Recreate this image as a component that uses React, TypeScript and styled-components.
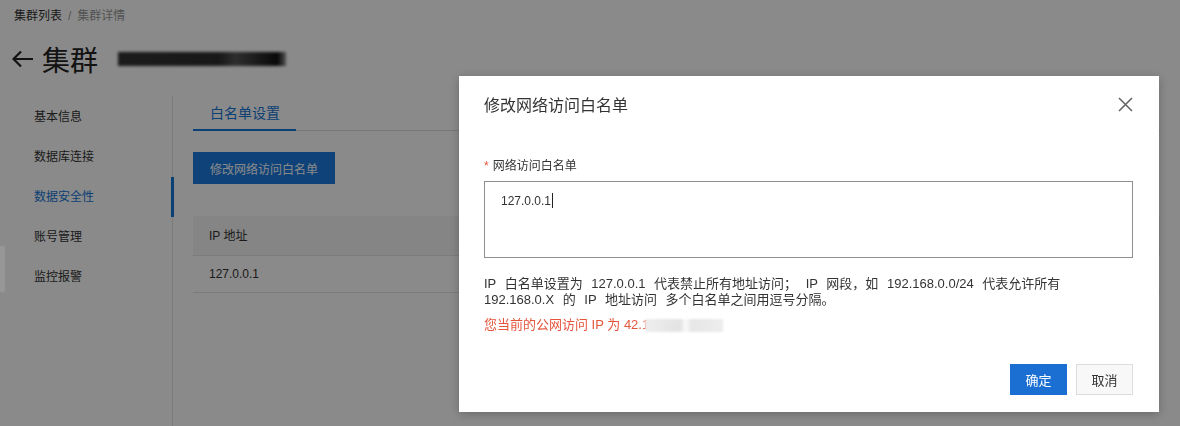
import React from 'react'
import styled, {createGlobalStyle} from 'styled-components'

const GlobalStyle = createGlobalStyle`
  html, body {
    margin: 0;
    padding: 0;
    background: #fff;
    font-family: "Liberation Sans", "Noto Sans CJK SC", sans-serif;
    color: #333;
  }
  * {
    box-sizing: border-box;
  }
`

const Page = styled.div`
  height: 426px;
  overflow: hidden;
`

const Breadcrumb = styled.div`
  display: flex;
  align-items: center;
  gap: 6px;
  padding: 8px 0 0 14px;
  font-size: 12px;
  line-height: 16px;
  color: #333;

  span.sep, span.current {
    color: #999;
  }
`

const TitleRow = styled.div`
  display: flex;
  align-items: center;
  height: 44px;
  margin-top: 13px;
  padding-left: 12px;
  font-size: 28px;
  color: #222;

  h1 {
    margin: 0 0 0 8px;
    font-size: 28px;
    font-weight: 400;
  }
`

const BlurredName = styled.div`
  width: 168px;
  height: 14px;
  margin-left: 20px;
  background: linear-gradient(90deg, #333 0%, #2e2e2e 60%, #555 70%, #111 95%, #999 100%);
  filter: blur(1.5px);
`

const Body = styled.div`
  display: flex;
  margin-top: 15px;
`

const Nav = styled.ul`
  list-style: none;
  margin: 0;
  padding: 1px 0 0;
  width: 173px;
  height: 340px;
  border-right: 1px solid #e2e2e2;
`

const NavItem = styled.li<{ $active?: boolean }>`
  position: relative;
  height: 40px;
  line-height: 40px;
  padding-left: 34px;
  font-size: 12px;
  color: ${({$active}) => $active ? '#1476d6' : '#333'};

  &::after {
    content: "";
    display: ${({$active}) => $active ? 'block' : 'none'};
    position: absolute;
    right: -2px;
    top: 0;
    width: 3px;
    height: 40px;
    background: #1476d6;
  }
`

const Content = styled.div`
  flex: 1;
  padding: 0 20px;
`

const Tabs = styled.div`
  display: flex;
  border-bottom: 1px solid #ddd;
  height: 35px;
`

const Tab = styled.div`
  padding: 0 16px 0 17px;
  font-size: 14px;
  line-height: 34px;
  color: #1476d6;
  border-bottom: 2px solid #1476d6;
  margin-bottom: -1px;
`

const PrimaryButton = styled.button`
  height: 32px;
  padding: 0 17px;
  border: none;
  background: #1a7ae0;
  color: #fff;
  font-family: inherit;
  font-size: 12px;
  cursor: pointer;
`

const TopButton = styled(PrimaryButton)`
  margin-top: 21px;
`

const Table = styled.div`
  margin-top: 32px;
  font-size: 12px;
`

const TableRow = styled.div<{ $head?: boolean }>`
  height: ${({$head}) => $head ? '40px' : '37px'};
  line-height: ${({$head}) => $head ? '40px' : '36px'};
  padding-left: 16px;
  background: ${({$head}) => $head ? '#f6f6f6' : '#fff'};
  border-bottom: 1px solid #e6e6e6;
  color: #333;
`

const SideHandle = styled.div`
  position: fixed;
  left: -2px;
  top: 245px;
  width: 8px;
  height: 48px;
  border-radius: 3px;
  background: #979797;
  border: 1px solid #8b8b8b;
  z-index: 20;
`

const Overlay = styled.div`
  position: fixed;
  inset: 0;
  background: rgba(0, 0, 0, 0.46);
  z-index: 10;
`

const Dialog = styled.div`
  position: fixed;
  left: 459px;
  top: 76px;
  width: 700px;
  height: 336px;
  background: #fff;
  box-shadow: 0 2px 10px rgba(0, 0, 0, 0.25);
  z-index: 30;
  display: flex;
  flex-direction: column;
  padding: 0 26px 0 25px;
`

const DialogHeader = styled.div`
  display: flex;
  align-items: center;
  justify-content: space-between;
  height: 56px;

  h2 {
    margin: 0;
    font-size: 16px;
    font-weight: 400;
    color: #333;
  }
`

const CloseButton = styled.button`
  display: grid;
  place-items: center;
  width: 20px;
  height: 20px;
  padding: 0;
  margin-right: -2px;
  border: none;
  background: none;
  cursor: pointer;
`

const FieldLabel = styled.label`
  display: block;
  margin-top: 26px;
  font-size: 12px;
  line-height: 16px;
  color: #333;

  span {
    color: #e8553a;
    margin-right: 4px;
  }
`

const TextArea = styled.div`
  margin-top: 7px;
  height: 77px;
  border: 1px solid #8f8f8f;
  padding: 11px 16px;
  font-size: 12px;
  line-height: 16px;
  color: #333;
`

const Caret = styled.span`
  display: inline-block;
  width: 1px;
  height: 15px;
  margin-left: 1px;
  vertical-align: -3px;
  background: #222;
`

const HelpText = styled.p`
  margin: 18px 0 0;
  font-size: 13px;
  line-height: 16px;
  word-spacing: 5px;
  color: #333;
`

const WarnText = styled.p`
  display: flex;
  align-items: center;
  margin: 9px 0 0;
  font-size: 13px;
  line-height: 16px;
  color: #e4553c;
`

const BlurIp = styled.span`
  display: inline-block;
  width: 78px;
  height: 13px;
  margin-left: -4px;
  background: linear-gradient(90deg, #eee 0%, #e3e3e3 45%, #fafafa 52%, #e6e6e6 60%, #ededed 100%);
  filter: blur(1px);
`

const Footer = styled.div`
  display: flex;
  justify-content: flex-end;
  gap: 9px;
  margin-top: auto;
  padding-bottom: 17px;
`

const OkButton = styled(PrimaryButton)`
  width: 57px;
  height: 31px;
  padding: 0;
  font-size: 13px;
  background: #1b6fd3;
`

const CancelButton = styled.button`
  width: 57px;
  height: 31px;
  border: 1px solid #ddd;
  background: #f8f8f8;
  color: #333;
  font-family: inherit;
  font-size: 13px;
  cursor: pointer;
`

const App = () => {
  const navItems = ['基本信息', '数据库连接', '数据安全性', '账号管理', '监控报警']

  return (
    <Page>
      <GlobalStyle/>
      <Breadcrumb>
        <span>集群列表</span>
        <span className="sep">/</span>
        <span className="current">集群详情</span>
      </Breadcrumb>
      <TitleRow>
        <svg width="22" height="18" viewBox="0 0 22 18">
          <path d="M21 9H2M9 1.5L1.5 9L9 16.5" fill="none" stroke="#222" strokeWidth="2.2"/>
        </svg>
        <h1>集群</h1>
        <BlurredName/>
      </TitleRow>
      <Body>
        <Nav>
          {navItems.map((item, i) => (
            <NavItem key={item} $active={i === 2}>{item}</NavItem>
          ))}
        </Nav>
        <Content>
          <Tabs>
            <Tab>白名单设置</Tab>
          </Tabs>
          <TopButton>修改网络访问白名单</TopButton>
          <Table>
            <TableRow $head>IP 地址</TableRow>
            <TableRow>127.0.0.1</TableRow>
          </Table>
        </Content>
      </Body>

      <Overlay/>
      <SideHandle/>

      <Dialog>
        <DialogHeader>
          <h2>修改网络访问白名单</h2>
          <CloseButton aria-label="close">
            <svg width="15" height="15" viewBox="0 0 15 15">
              <path d="M1 1L14 14M14 1L1 14" stroke="#666" strokeWidth="1.6" fill="none"/>
            </svg>
          </CloseButton>
        </DialogHeader>
        <FieldLabel><span>*</span>网络访问白名单</FieldLabel>
        <TextArea>127.0.0.1<Caret/></TextArea>
        <HelpText>
          IP 白名单设置为 127.0.0.1 代表禁止所有地址访问； IP 网段，如 192.168.0.0/24 代表允许所有<br/>
          192.168.0.X 的 IP 地址访问 多个白名单之间用逗号分隔。
        </HelpText>
        <WarnText>您当前的公网访问 IP 为 42.1<BlurIp/></WarnText>
        <Footer>
          <OkButton>确定</OkButton>
          <CancelButton>取消</CancelButton>
        </Footer>
      </Dialog>
    </Page>
  )
}

export default App
